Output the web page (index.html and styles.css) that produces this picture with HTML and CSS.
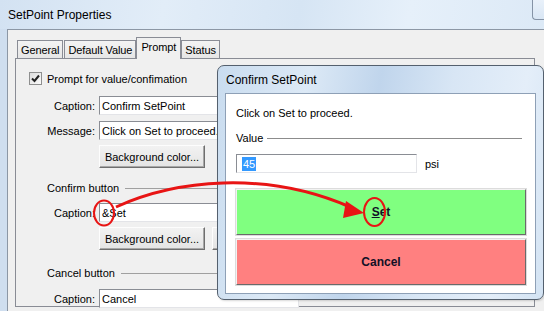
FILE: index.html
```html
<!DOCTYPE html>
<html lang="en">
<head>
    <meta charset="UTF-8">
    <title>SetPoint Properties</title>
    <link rel="stylesheet" href="styles.css">
</head>
<body>
    <div class="window">
        <div class="titlebar">
            <span class="title">SetPoint Properties</span>
            <span class="close-btn"></span>
        </div>
        <div class="client">
            <div class="tabs">
                <div class="tab">General</div>
                <div class="tab">Default Value</div>
                <div class="tab active">Prompt</div>
                <div class="tab">Status</div>
            </div>
            <div class="tab-page">
                <div class="check-row">
                    <span class="checkbox">
                        <svg width="9" height="9" viewBox="0 0 9 9"><path d="M1 4.5 L3.5 7 L8 1.5" fill="none" stroke="#222" stroke-width="2"/></svg>
                    </span>
                    <span>Prompt for value/confimation</span>
                </div>

                <div class="field first">
                    <span class="field-label">Caption:</span>
                    <span class="textbox">Confirm SetPoint</span>
                </div>
                <div class="field">
                    <span class="field-label">Message:</span>
                    <span class="textbox">Click on Set to proceed.</span>
                </div>
                <div class="btn-row">
                    <span class="win-btn">Background color...</span>
                </div>

                <div class="group-title"><span>Confirm button</span><span class="group-line"></span></div>
                <div class="field">
                    <span class="field-label">Caption:</span>
                    <span class="textbox">&amp;Set</span>
                </div>
                <div class="btn-row">
                    <span class="win-btn">Background color...</span>
                    <span class="win-btn small"></span>
                </div>

                <div class="group-title cancel"><span>Cancel button</span><span class="group-line"></span></div>
                <div class="field">
                    <span class="field-label">Caption:</span>
                    <span class="textbox">Cancel</span>
                </div>
            </div>
        </div>
    </div>

    <div class="dialog">
        <div class="dialog-title">Confirm SetPoint</div>
        <div class="dialog-client">
            <div class="dialog-msg">Click on Set to proceed.</div>
            <div class="value-title"><span>Value</span><span class="group-line"></span></div>
            <div class="value-row">
                <span class="textbox value-box"><span class="selected">45</span></span>
                <span class="unit">psi</span>
            </div>
            <div class="big-btn set-btn"><span><u>S</u>et</span></div>
            <div class="big-btn cancel-btn"><span>Cancel</span></div>
        </div>
    </div>

    <svg class="annotation" width="544" height="311" viewBox="0 0 544 311">
        <ellipse cx="104" cy="213" rx="10" ry="12.5" fill="none" stroke="#e81414" stroke-width="2"/>
        <path d="M116 207 C175 180 265 170 350 207" fill="none" stroke="#e81414" stroke-width="3"/>
        <polygon points="364,213 346,201 343,218" fill="#e81414"/>
        <ellipse cx="374.5" cy="212" rx="10.5" ry="14" fill="none" stroke="#e81414" stroke-width="2"/>
    </svg>
</body>
</html>
```

FILE: styles.css
```css
* {
    margin: 0;
    padding: 0;
    box-sizing: border-box;
}

body {
    width: 544px;
    height: 311px;
    overflow: hidden;
    position: relative;
    font-family: "Liberation Sans", Arial, sans-serif;
    font-size: 11px;
    color: #000;
    background: #cfdeef;
}

.window {
    display: flex;
    flex-direction: column;
    height: 311px;
}

.titlebar {
    height: 29px;
    display: flex;
    justify-content: space-between;
    align-items: flex-start;
    background: linear-gradient(100deg, #d3e2f2 0%, #e2edf8 30%, #d6e5f4 55%, #e6f0fa 75%, #dce9f6 100%);
}

.title {
    font-size: 12px;
    padding: 8px 0 0 8px;
}

.close-btn {
    width: 12px;
    height: 20px;
    border: 1px solid #8593a6;
    border-top: none;
    border-right: none;
    border-radius: 0 0 0 4px;
    background: linear-gradient(#e9f1fa, #d9e6f4);
}

.client {
    flex: 1;
    margin-left: 7px;
    border-top: 1px solid #8c97a5;
    border-left: 1px solid #8c97a5;
    background: #f0f0f0;
}

.tabs {
    display: flex;
    align-items: flex-end;
    height: 28px;
    padding-left: 9px;
}

.tab {
    height: 18px;
    padding: 3px 3px 0;
    margin-right: 1px;
    border: 1px solid #898c95;
    border-bottom: none;
    background: linear-gradient(#f3f3f3, #e6e6e6);
    letter-spacing: -0.1px;
}

.tab.active {
    height: 22px;
    padding: 3px 4px 0;
    margin-left: -1px;
    margin-right: 0;
    margin-bottom: -1px;
    background: #f0f0f0;
    position: relative;
    z-index: 1;
}

.tab-page {
    width: 520px;
    height: 249px;
    margin-left: 7px;
    border: 1px solid #898c95;
    padding-top: 13px;
}

.check-row {
    display: flex;
    align-items: center;
    gap: 5px;
    height: 13px;
    padding-left: 13px;
}

.checkbox {
    width: 13px;
    height: 13px;
    border: 1px solid #8e8f8f;
    background: linear-gradient(135deg, #dcdcdc, #fbfbfb);
    display: flex;
    align-items: center;
    justify-content: center;
}

.field {
    display: flex;
    align-items: center;
    height: 19px;
    margin-top: 6px;
}

.field.first {
    margin-top: 11px;
}

.field-label {
    width: 79px;
    text-align: right;
    margin-right: 4px;
}

.textbox {
    display: flex;
    align-items: center;
    width: 200px;
    height: 19px;
    padding-left: 2px;
    background: #fff;
    border: 1px solid;
    border-color: #8a8d94 #e3e4e8 #e3e4e8 #8a8d94;
    white-space: nowrap;
    overflow: hidden;
}

.btn-row {
    display: flex;
    gap: 7px;
    margin-top: 5px;
    padding-left: 83px;
}

.win-btn {
    display: flex;
    align-items: center;
    justify-content: center;
    width: 106px;
    height: 23px;
    background: linear-gradient(#f2f2f2, #e4e4e4);
    border: 1px solid;
    border-color: #fdfdfd #6f6f6f #6f6f6f #fdfdfd;
    box-shadow: inset -1px -1px #a7a7a7;
}

.win-btn.small {
    width: 40px;
}

.group-title {
    display: flex;
    align-items: center;
    height: 14px;
    margin-top: 13px;
    padding-left: 31px;
}

.group-title.cancel {
    margin-top: 16px;
}

.group-line {
    flex: 1;
    margin-left: 6px;
    border-top: 1px solid #a0a0a0;
}

.group-title + .field {
    margin-top: 8px;
}

.group-title.cancel + .field {
    margin-top: 9px;
}

.dialog {
    position: absolute;
    left: 217px;
    top: 65px;
    width: 327px;
    height: 235px;
    border: 1px solid #54606e;
    border-radius: 7px;
    background: linear-gradient(100deg, #c9dcef 0%, #dce9f6 25%, #c0d5ec 45%, #d8e6f5 65%, #e4eef9 85%, #d3e3f3 100%);
    box-shadow: 1px 1px 2px rgba(0, 0, 0, 0.15);
    display: flex;
    flex-direction: column;
    padding: 0 7px 5px 7px;
}

.dialog-title {
    height: 27px;
    font-size: 12px;
    padding: 7px 0 0 1px;
}

.dialog-client {
    flex: 1;
    background: #fff;
    border: 1px solid #8ea0b6;
    padding: 12px 9px 0 10px;
}

.dialog-msg {
    height: 14px;
    line-height: 14px;
}

.value-title {
    display: flex;
    align-items: center;
    height: 14px;
    margin-top: 11px;
    padding-right: 4px;
}

.value-title .group-line {
    margin-left: 4px;
    border-top-color: #8c8c8c;
}

.value-row {
    display: flex;
    align-items: center;
    margin-top: 9px;
    height: 19px;
}

.value-box {
    width: 181px;
    padding-left: 5px;
}

.selected {
    background: #3399ff;
    color: #fff;
    padding: 0 1px;
    line-height: 14px;
}

.unit {
    margin-left: 8px;
}

.big-btn {
    height: 46px;
    display: flex;
    align-items: center;
    justify-content: center;
    font-weight: bold;
    font-size: 12px;
    color: #111126;
    border: 1px solid;
    border-color: #f2f2f2 #6a6a6a #6a6a6a #f2f2f2;
    box-shadow: 0 0 0 1px #dcdcdc;
}

.set-btn {
    margin-top: 16px;
    background: #80ff80;
}

.cancel-btn {
    margin-top: 4px;
    background: #ff8080;
}

.annotation {
    position: absolute;
    left: 0;
    top: 0;
    pointer-events: none;
}
```
